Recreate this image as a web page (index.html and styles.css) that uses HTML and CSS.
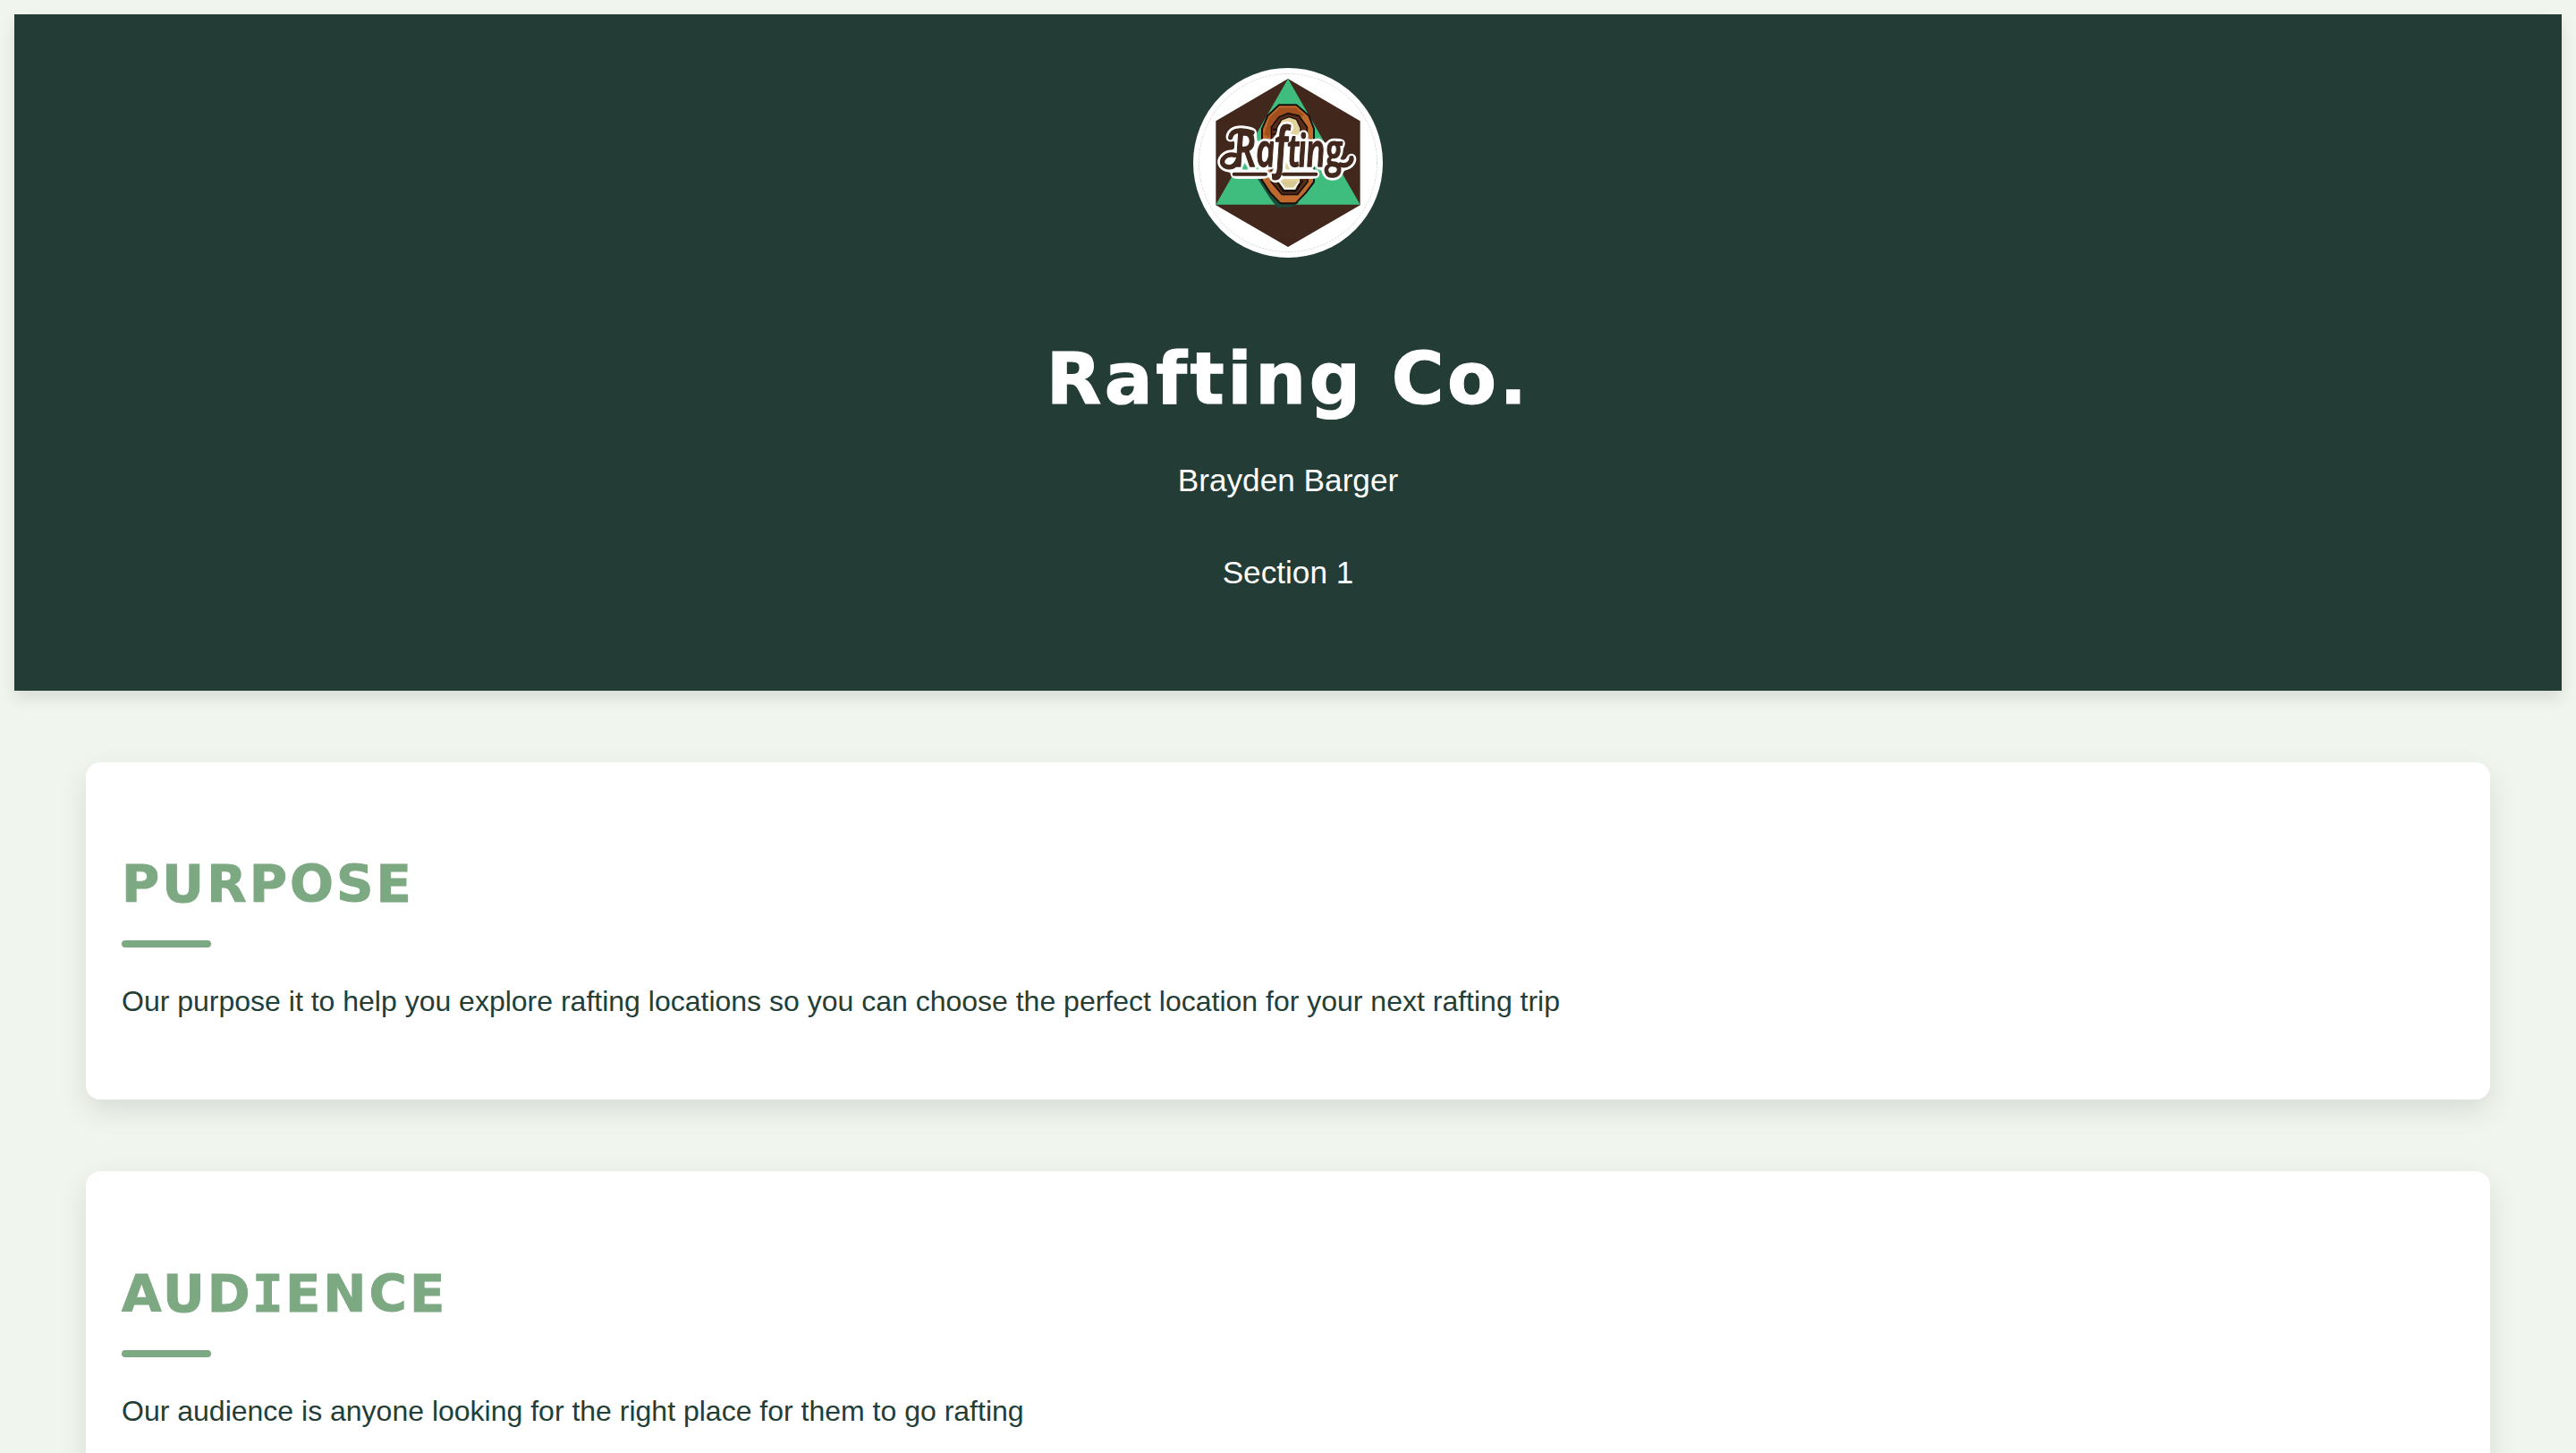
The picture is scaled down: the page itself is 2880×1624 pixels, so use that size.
FILE: index.html
```html
<!DOCTYPE html>
<html lang="en">
<head>
<meta charset="utf-8">
<title>Rafting Co.</title>
<link rel="stylesheet" href="styles.css">
</head>
<body>
<header class="site-header">
  <svg class="logo" viewBox="60 66 600 600" role="img" aria-label="Rafting">
    <defs>
      <filter id="outline" x="-10%" y="-20%" width="120%" height="140%" color-interpolation-filters="sRGB">
        <feGaussianBlur in="SourceAlpha" stdDeviation="8"/>
        <feComponentTransfer result="edge">
          <feFuncR type="linear" slope="0" intercept="1"/>
          <feFuncG type="linear" slope="0" intercept="1"/>
          <feFuncB type="linear" slope="0" intercept="1"/>
          <feFuncA type="linear" slope="14" intercept="-1.1"/>
        </feComponentTransfer>
        <feMerge>
          <feMergeNode in="edge"/>
          <feMergeNode in="SourceGraphic"/>
        </feMerge>
      </filter>
    </defs>
    <circle cx="360" cy="366" r="300" fill="#fff"/>
    <circle cx="360" cy="366" r="299" fill="none" stroke="#a9adab" stroke-width="1.8" stroke-dasharray="7 4"/>
    <path d="M360 84 602 226V508L360 648 118 508V226Z" fill="#42271d"/>
    <path d="M360 84 602 506H118Z" fill="#3fbd7e"/>
    <path d="M252 410 300 485 325 516 372 514 396 500 300 410Z" fill="#1d4a38"/>
    <path d="M330 172H388L430 208 447 252V430L420 466 385 502H335L300 466 273 425V252L292 208Z" fill="#c0692c" stroke="#130f0d" stroke-width="6"/>
    <path d="M298 214 333 181H386L414 206 396 216 364 202 330 212 304 240 296 282 280 270Z" fill="#a24f1d"/>
    <path d="M330 212 360 200 396 208 424 246 426 430 392 472H340L304 430V246Z" fill="#5a2c18" stroke="#130f0d" stroke-width="5"/>
    <path d="M338 222 364 212 388 220 402 250V425L386 458H346L322 425V250Z" fill="#e2d39c" stroke="#17110e" stroke-width="4"/>
    <path d="M308 254H345M308 270H340M320 425 345 462H386L410 425" fill="none" stroke="#130f0d" stroke-width="5"/>
    <path d="M332 428 350 452H380L398 428" fill="#d9ca94" stroke="#fff" stroke-width="5"/>
    <g filter="url(#outline)">
      <path class="flourish" d="M182 340C145 330 122 372 157 380C180 385 190 365 196 345M167 281C172 248 222 258 240 265"/>
      <path class="flourish underline" d="M179 404H285M345 404H454"/>
      <path class="flourish" d="M536 372C558 380 574 364 573 350"/>
      <text class="wordmark" transform="translate(0 378) skewX(5) scale(.73 1)"><tspan x="250" class="capital">R</tspan><tspan x="350">a</tspan><tspan x="438" class="tall">f</tspan><tspan x="495">t</tspan><tspan x="543">i</tspan><tspan x="579">n</tspan><tspan x="668">g</tspan></text>
    </g>
  </svg>
  <h1 class="site-title">Rafting Co.</h1>
  <p class="byline">Brayden Barger</p>
  <p class="byline">Section 1</p>
</header>
<main class="sections">
  <section class="card">
    <h2 class="card-title">PURPOSE</h2>
    <p class="card-text">Our purpose it to help you explore rafting locations so you can choose the perfect location for your next rafting trip</p>
  </section>
  <section class="card">
    <h2 class="card-title">AUD<span class="serif-i">I</span>ENCE</h2>
    <p class="card-text">Our audience is anyone looking for the right place for them to go rafting</p>
  </section>
</main>
</body>
</html>
```
FILE: styles.css
```css
html {
  overflow: hidden;
  background: #f0f5ee;
}

body {
  box-sizing: border-box;
  margin: 0;
  padding: 16px 16px 0;
  height: 1624px;
  overflow: hidden;
  background: #f0f5ee;
  color: #243e36;
  font-family: "Liberation Sans", Arial, sans-serif;
}

.site-header {
  box-sizing: border-box;
  height: 756px;
  padding: 60px 0;
  display: flex;
  flex-direction: column;
  align-items: center;
  background: #233d36;
  color: #fff;
  box-shadow: 0 8px 16px rgba(0, 0, 0, 0.1);
}

.logo {
  width: 200px;
  height: 200px;
  flex: none;
  border: 6px solid #fff;
  border-radius: 50%;
  background: #fff;
}

.wordmark {
  font-family: "Open Sans", sans-serif;
  font-style: italic;
  font-weight: 600;
  font-size: 152px;
  fill: #42271d;
  stroke: #42271d;
  stroke-width: 4px;
  stroke-linejoin: round;
}

.wordmark .capital {
  font-size: 170px;
}

.wordmark .tall {
  font-size: 184px;
}

.flourish {
  fill: none;
  stroke: #42271d;
  stroke-width: 16px;
  stroke-linecap: round;
  stroke-linejoin: round;
}

.underline {
  stroke-width: 12px;
}

.site-title {
  margin: 88px 0 0;
  font: 700 80px/96px "DejaVu Sans", Verdana, sans-serif;
  letter-spacing: 3.5px;
  -webkit-text-stroke: 1.2px #fff;
}

.byline {
  margin: 45px 0 0;
  font-size: 35.2px;
  line-height: 40px;
}

.byline + .byline {
  margin-top: 63px;
}

.sections {
  display: flex;
  flex-direction: column;
  gap: 80px;
  padding: 80px;
}

.card {
  box-sizing: border-box;
  height: 377px;
  padding: 103px 40px 0;
  border-radius: 16px;
  background: #fff;
  box-shadow: 0 12px 32px rgba(0, 0, 0, 0.1);
}

.card + .card {
  padding-top: 104px;
}

.card-title {
  margin: 0;
  font: 700 57.6px/68px "DejaVu Sans", Verdana, sans-serif;
  letter-spacing: 3.1px;
  color: #7ca982;
  -webkit-text-stroke: 1px #7ca982;
}

.card-title::after {
  content: "";
  display: block;
  width: 100px;
  height: 8px;
  margin-top: 28px;
  border-radius: 4px;
  background: #7ca982;
}

.serif-i {
  font-family: "DejaVu Sans Mono", monospace;
  margin: 0 -0.8px;
}

.card-text {
  margin: 42px 0 0;
  font-size: 32px;
  line-height: 36px;
}
```
